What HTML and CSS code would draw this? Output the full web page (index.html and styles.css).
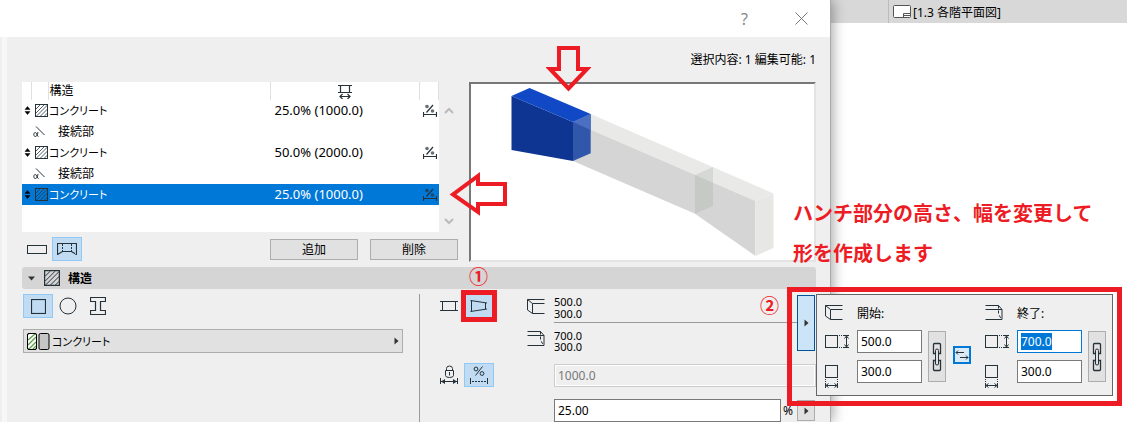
FILE: index.html
```html
<!DOCTYPE html>
<html lang="ja">
<head>
    <meta charset="UTF-8">
    <meta name="viewport" content="width=device-width, initial-scale=1.0">
    <title>構造</title>
    <link rel="stylesheet" href="styles.css">
</head>

<body>
    <svg class="sprite" aria-hidden="true">
        <symbol id="sort" viewBox="0 0 7 9">
            <path d="M1 3.5 3.5 0.5 6 3.5zM1 5.5 3.5 8.5 6 5.5z" fill="#000" stroke="#000" stroke-width="0.5"/>
        </symbol>
        <symbol id="hatch" viewBox="0 0 13 13">
            <path d="M1 5 5 1M1 9 9 1M1 12.5 12.5 1M5 12.5 12.5 5M9 12.5 12.5 9" stroke-width="0.8"/>
            <rect x="0.5" y="0.5" width="12" height="12"/>
        </symbol>
        <symbol id="angle" viewBox="0 0 13 12">
            <path d="M3 0.5 11.5 9"/>
            <path d="M5 6C4.5 8.5 4 10.5 2.3 10.5 0.3 10.5 0.3 6.5 2.3 6.5 4 6.5 3.8 10.5 5.5 10.5"/>
        </symbol>
        <symbol id="percent-width" viewBox="0 0 14 14">
            <path d="M3.5 8.5 10 1M0.5 8v5M13.5 8v5M1 10.5h12" stroke-width="1.2"/>
            <circle cx="4" cy="2.5" r="1.8" fill="#26323a" fill-opacity="0.7" stroke="none"/>
            <circle cx="9.5" cy="7" r="1.8" fill="#26323a" fill-opacity="0.7" stroke="none"/>
        </symbol>
        <symbol id="corner-start" viewBox="0 0 18 17">
            <path d="M17.5 1.5H0.5V12L5.5 15.5H17.5M0.5 1.5 5.5 5.5H17.5M5.5 5.5V15.5"/>
        </symbol>
        <symbol id="corner-end" viewBox="0 0 18 17">
            <path d="M0.5 1.5H13.5L17 5.5V15.5H0.5M0.5 5.5H17"/>
            <path d="M13.5 1.5V10L16 14.5" stroke-dasharray="3 2"/>
        </symbol>
        <symbol id="height" viewBox="0 0 25 14">
            <rect x="0.5" y="0.5" width="12" height="12"/>
            <path d="M14 0.5H20M14 12.5H20" stroke-dasharray="1 1"/>
            <path d="M21.5 1V12M19.5 3.5 21.5 1 23.5 3.5M19.5 9.5 21.5 12 23.5 9.5M19 0.5h5M19 12.5h5"/>
        </symbol>
        <symbol id="width" viewBox="0 0 14 24">
            <rect x="0.5" y="0.5" width="12" height="12"/>
            <path d="M0.5 14V18M12.5 14V18" stroke-dasharray="1 1"/>
            <path d="M1 20.5H12M3.5 18.5 1 20.5 3.5 22.5M9.5 18.5 12 20.5 9.5 22.5M0.5 18v5M12.5 18v5"/>
        </symbol>
        <symbol id="chain" viewBox="0 0 10 30">
            <path d="M3 11.5H1.5V2.5Q1.5 1.5 2.5 1.5H7.5Q8.5 1.5 8.5 2.5V11.5H7M3 18.5H1.5V27.5Q1.5 28.5 2.5 28.5H7.5Q8.5 28.5 8.5 27.5V18.5H7" stroke-width="1.3"/>
            <path d="M3.5 22V8.5Q3.5 7 5 7T6.5 8.5V22Q6.5 23 5 23T3.5 22z"/>
        </symbol>
        <symbol id="right" viewBox="0 0 5 8">
            <path d="M0.5 0.5 4.5 4 0.5 7.5z" fill="#333" stroke="none"/>
        </symbol>
    </svg>

    <div class="screen">
        <section class="dialog">
            <header class="titlebar">
                <button class="title-button" type="button">?</button>
                <button class="title-button" type="button" aria-label="閉じる">
                    <svg class="close" width="13" height="13" viewBox="0 0 13 13"><path d="M0.5 0.5 12.5 12.5M12.5 0.5 0.5 12.5"/></svg>
                </button>
            </header>

            <div class="dialog-body">
                <div class="status">選択内容: 1 編集可能: 1</div>

                <div class="overview">
                    <div class="segments">
                        <div class="list">
                            <table>
                                <colgroup>
                                    <col class="col-sort"><col class="col-icon"><col><col class="col-length"><col class="col-mode">
                                </colgroup>
                                <thead>
                                    <tr>
                                        <th></th>
                                        <th></th>
                                        <th>構造</th>
                                        <th class="center">
                                            <svg width="14" height="15" viewBox="0 0 14 15"><path d="M0 1.5h14M0 8.5h14M2.5 1.5v7M11.5 1.5v7M2 12.5h10M4.5 10 2 12.5 4.5 15M9.5 10 12 12.5 9.5 15" stroke-width="1.2"/></svg>
                                        </th>
                                        <th></th>
                                    </tr>
                                </thead>
                                <tbody>
                                    <tr>
                                        <td><svg width="7" height="9"><use href="#sort"/></svg></td>
                                        <td><svg width="13" height="13"><use href="#hatch"/></svg></td>
                                        <td class="kana">コンクリート</td>
                                        <td>25.0% (1000.0)</td>
                                        <td><svg width="14" height="14"><use href="#percent-width"/></svg></td>
                                    </tr>
                                    <tr class="joint">
                                        <td></td>
                                        <td><svg width="13" height="12"><use href="#angle"/></svg></td>
                                        <td>接続部</td>
                                        <td></td>
                                        <td></td>
                                    </tr>
                                    <tr>
                                        <td><svg width="7" height="9"><use href="#sort"/></svg></td>
                                        <td><svg width="13" height="13"><use href="#hatch"/></svg></td>
                                        <td class="kana">コンクリート</td>
                                        <td>50.0% (2000.0)</td>
                                        <td><svg width="14" height="14"><use href="#percent-width"/></svg></td>
                                    </tr>
                                    <tr class="joint">
                                        <td></td>
                                        <td><svg width="13" height="12"><use href="#angle"/></svg></td>
                                        <td>接続部</td>
                                        <td></td>
                                        <td></td>
                                    </tr>
                                    <tr class="selected">
                                        <td><svg width="7" height="9"><use href="#sort"/></svg></td>
                                        <td><svg width="13" height="13"><use href="#hatch"/></svg></td>
                                        <td class="kana">コンクリート</td>
                                        <td>25.0% (1000.0)</td>
                                        <td><svg width="14" height="14"><use href="#percent-width"/></svg></td>
                                    </tr>
                                </tbody>
                            </table>
                            <div class="scroller">
                                <svg width="10" height="7" viewBox="0 0 10 7"><path d="M1 6 5 2 9 6"/></svg>
                                <svg width="10" height="7" viewBox="0 0 10 7"><path d="M1 1 5 5 9 1"/></svg>
                            </div>
                        </div>

                        <div class="toolbar">
                            <button class="tool" type="button" aria-label="単一">
                                <svg width="20" height="9" viewBox="0 0 20 9"><rect x="0.5" y="0.5" width="19" height="8"/></svg>
                            </button>
                            <button class="tool active" type="button" aria-label="複数">
                                <svg width="20" height="12" viewBox="0 0 20 12"><path d="M0.5 11.5V0.5H19.5V11.5L14.5 8.5H5.5z" stroke-width="1.2"/><path d="M5.5 1v7M14.5 1v7" stroke-dasharray="2 1"/></svg>
                            </button>
                            <div class="actions">
                                <button class="push" type="button">追加</button>
                                <button class="push" type="button">削除</button>
                            </div>
                        </div>
                    </div>

                    <div class="preview">
                        <svg class="model" viewBox="471 84 343 176">
                            <g stroke="none">
                                <path d="M590.7 114 773.5 193.5 755.5 201 573 122z" fill="#e9eae8"/>
                                <path d="M573 122 755.5 201V256L695 213.7 573 161z" fill="#d5d5d5"/>
                                <path d="M755.5 201 773.5 193.5V248L755.5 256z" fill="#e7e8e6"/>
                                <path d="M695 175 713 167V206L695 213.7z" fill="#a8aea8" fill-opacity="0.3"/>
                                <path d="M511.5 96 573 122V161L511.5 150z" fill="#0f3592"/>
                                <path d="M511.5 96 529.5 88 590.7 114 573 122z" fill="#1148c6"/>
                                <path d="M573 122 590.7 114V153.3L573 161z" fill="#3157aa"/>
                                <path d="M573 122 590.7 114V130z" fill="#4b70c2"/>
                            </g>
                        </svg>
                        <svg class="arrow arrow-down" width="45" height="48" viewBox="0 0 45 48"><path d="M13 4H32V25H41L22.5 44.5 4 25H13z"/></svg>
                        <svg class="arrow arrow-left" width="60" height="48" viewBox="0 0 60 48"><path d="M56 14H29V6L4 24.5 29 42V34H56z"/></svg>
                    </div>
                </div>

                <h2 class="section-head">
                    <svg width="7" height="5" viewBox="0 0 7 5"><path d="M0 0.5H7L3.5 4.5z" fill="#333" stroke="none"/></svg>
                    <svg width="16" height="16"><use href="#hatch"/></svg>
                    構造
                    <span class="step step-one">①</span>
                </h2>

                <div class="details">
                    <div class="section-left">
                        <div class="shapes">
                            <button class="tool active" type="button" aria-label="四角形">
                                <svg width="15" height="15" viewBox="0 0 15 15"><rect x="0.5" y="0.5" width="14" height="14" stroke-width="1.2"/></svg>
                            </button>
                            <button class="tool" type="button" aria-label="円形">
                                <svg width="18" height="18" viewBox="0 0 18 18"><circle cx="9" cy="9" r="8"/></svg>
                            </button>
                            <button class="tool" type="button" aria-label="形鋼">
                                <svg width="16" height="18" viewBox="0 0 16 18"><path d="M0.5 0.5H15.5V4.5H10.5V13.5H15.5V17.5H0.5V13.5H5.5V4.5H0.5z" stroke-width="1.2"/></svg>
                            </button>
                        </div>
                        <button class="material" type="button">
                            <svg width="23" height="17" viewBox="0 0 23 17">
                                <rect x="0.5" y="0.5" width="9" height="16" rx="1.5" fill="#fff"/>
                                <path d="M1 7 8 1M1 12 9 4M2 16 9 9M6 16 9 13" stroke="#5aa04c" stroke-width="1.3"/>
                                <rect x="0.5" y="0.5" width="9" height="16" rx="1.5" stroke="#000"/>
                                <rect x="12" y="0.5" width="10" height="16" rx="1.5" fill="#c6c6c6" stroke="#000"/>
                            </svg>
                            <span class="kana">コンクリート</span>
                            <svg width="5" height="8"><use href="#right"/></svg>
                        </button>
                    </div>

                    <div class="section-right">
                        <div class="modes">
                            <button class="tool" type="button" aria-label="均一">
                                <svg width="18" height="10" viewBox="0 0 18 10"><path d="M0 0.5h18M0 9.5h18M2.5 0.5v9M15.5 0.5v9"/></svg>
                            </button>
                            <button class="tool active framed" type="button" aria-label="テーパー">
                                <svg width="18" height="12" viewBox="0 0 18 12"><path d="M0.5 0.5 17 3M0.5 11.5 17 9M1.5 0.5v11M15.5 3v6"/></svg>
                            </button>
                        </div>
                        <svg class="end-icon" width="18" height="17"><use href="#corner-start"/></svg>
                        <div class="pair first">500.0<br>300.0</div>
                        <svg class="end-icon end-two" width="18" height="17"><use href="#corner-end"/></svg>
                        <div class="pair">700.0<br>300.0</div>

                        <div class="flyout">
                            <span class="step step-two">②</span>
                            <button class="more open" type="button" aria-label="寸法">
                                <svg width="5" height="8"><use href="#right"/></svg>
                            </button>
                            <div class="popup">
                                <div class="end">
                                    <svg width="18" height="17"><use href="#corner-start"/></svg>
                                    <span class="end-name">開始:</span>
                                    <label for="startHeight"><svg width="25" height="14"><use href="#height"/></svg></label>
                                    <input id="startHeight" type="text" value="500.0">
                                    <label for="startWidth"><svg width="14" height="24"><use href="#width"/></svg></label>
                                    <input id="startWidth" type="text" value="300.0">
                                    <button class="link" type="button" aria-label="連動"><svg width="10" height="30"><use href="#chain"/></svg></button>
                                </div>
                                <button class="swap" type="button" aria-label="入れ替え">
                                    <svg width="14" height="10" viewBox="0 0 14 10"><path d="M1 2.5h8M3 0.5 1 2.5 3 4.5M5 7.5h8M11 5.5 13 7.5 11 9.5"/></svg>
                                </button>
                                <div class="end">
                                    <svg width="18" height="17"><use href="#corner-end"/></svg>
                                    <span class="end-name">終了:</span>
                                    <label for="endHeight"><svg width="25" height="14"><use href="#height"/></svg></label>
                                    <input id="endHeight" type="text" value="700.0" autofocus>
                                    <label for="endWidth"><svg width="14" height="24"><use href="#width"/></svg></label>
                                    <input id="endWidth" type="text" value="300.0">
                                    <button class="link" type="button" aria-label="連動"><svg width="10" height="30"><use href="#chain"/></svg></button>
                                </div>
                            </div>
                        </div>

                        <div class="modes length-modes">
                            <button class="tool" type="button" aria-label="固定長">
                                <svg width="18" height="20" viewBox="0 0 18 20"><path d="M6.5 5V3.5Q6.5 1 9.5 1T12.5 3.5V5M5.5 5.5H13.5V10.5Q13.5 12.5 9.5 12.5T5.5 10.5zM9.5 7V10.5M0.5 13v6M17.5 13v6M1 16.5h16"/><path d="M1 16.5 5 14V19zM17 16.5 13 14V19z" fill="#26323a" stroke="none"/></svg>
                            </button>
                            <button class="tool active" type="button" aria-label="比率">
                                <svg width="18" height="18" viewBox="0 0 18 18"><path d="M5.5 9.5 12.5 0.5M0.5 12v6M17.5 12v6"/><circle cx="6" cy="3" r="1.9"/><circle cx="12" cy="7.5" r="1.9"/><path d="M2 15.5h15" stroke-dasharray="2 1"/></svg>
                            </button>
                        </div>
                        <input class="total" type="text" value="1000.0" aria-label="長さ" disabled>
                        <input class="ratio" id="ratio" type="text" value="25.00">
                        <label class="unit" for="ratio">%</label>
                        <button class="more" type="button" aria-label="その他"><svg width="5" height="8"><use href="#right"/></svg></button>
                    </div>
                </div>
            </div>
        </section>

        <main class="workspace">
            <nav class="tabs">
                <a class="tab" href="#">
                    <svg width="18" height="13" viewBox="0 0 18 13"><rect x="0.5" y="0.5" width="17" height="12" rx="1" fill="#fff" stroke="#555"/><path d="M10.5 12.5V8.5H17.5M10.5 10.5H17.5" stroke="#555"/></svg>
                    [1.3 各階平面図]
                </a>
            </nav>
        </main>

        <p class="note">ハンチ部分の高さ、幅を変更して<br>形を作成します</p>
    </div>

    <script>
        const endHeight = document.getElementById('endHeight');
        endHeight.focus();
        endHeight.select();
    </script>
</body>
</html>
```

FILE: styles.css
```css
* {
    box-sizing: border-box;
}

body {
    margin: 0;
    background: #fff;
    color: #000;
    font-family: "Noto Sans", "Noto Sans CJK JP", sans-serif;
    font-size: 12px;
}

button,
input {
    font: inherit;
    color: inherit;
    margin: 0;
}

button {
    display: flex;
    align-items: center;
    justify-content: center;
    padding: 0;
    border: none;
    background: none;
}

svg {
    display: block;
    flex: none;
    fill: none;
    stroke: #26323a;
}

.sprite {
    position: absolute;
    width: 0;
    height: 0;
}

.screen {
    position: relative;
    display: flex;
    min-height: 100vh;
}

.dialog {
    position: relative;
    z-index: 1;
    flex: 1;
    display: flex;
    flex-direction: column;
    background: #efefef;
    border-right: 1px solid #aaa;
    box-shadow: 2px 0 12px rgba(0, 0, 0, 0.35);
}

.titlebar {
    display: flex;
    justify-content: flex-end;
    height: 37px;
    background: #fff;
}

.title-button {
    width: 57px;
    color: #888;
    font-size: 16px;
}

.close {
    stroke: #777;
}

.dialog-body {
    flex: 1;
    display: flex;
    flex-direction: column;
    padding: 0 14px 0 22px;
    background: linear-gradient(to right, #efefef 2px, #f7f7f7 2px, #f7f7f7 7px, #efefef 7px);
}

.status {
    height: 45px;
    line-height: 45px;
    text-align: right;
}

/* segment list and preview */

.overview {
    display: grid;
    grid-template-columns: 1fr 347px;
    gap: 11px;
}

.list {
    display: flex;
    height: 150px;
}

table {
    flex: 1;
    align-self: flex-start;
    table-layout: fixed;
    border-collapse: collapse;
    background: #fff;
    font-size: 13px;
}

.list table {
    box-shadow: 0 27px #fff;
}

.col-sort {
    width: 9px;
}

.col-icon {
    width: 17px;
}

.col-length {
    width: 149px;
}

.col-mode {
    width: 19px;
}

th,
td {
    height: 21px;
    padding: 0;
    line-height: 20px;
    text-align: left;
    font-weight: normal;
    white-space: nowrap;
}

th {
    height: 18px;
    line-height: 18px;
    font-size: 12px;
    border-right: 1px solid #e0e0e0;
}

th:nth-child(3),
td:nth-child(3) {
    padding-left: 1px;
}

td:nth-child(1) svg {
    margin-left: 2px;
}

td:nth-child(2) svg {
    margin-left: 4px;
}

td:nth-child(4) {
    padding: 0 0 1px 4px;
}

td:nth-child(5) svg {
    margin-left: 3px;
}

th.center svg {
    margin: 0 auto;
}

.kana {
    font-size: 11px;
    font-feature-settings: "palt";
}

.joint td {
    font-size: 12px;
}

.joint td:nth-child(2) svg {
    margin-left: 2px;
}

.joint td:nth-child(3) {
    padding-left: 10px;
}

.selected {
    background: #0078d7;
    color: #fff;
}

.scroller {
    width: 19px;
    display: flex;
    flex-direction: column;
    justify-content: space-between;
    align-items: center;
    padding: 25px 0 7px;
}

.scroller svg {
    stroke: #bbb;
    stroke-width: 2;
}

.toolbar {
    display: flex;
    align-items: center;
    margin-top: 5px;
}

.tool {
    width: 30px;
    height: 24px;
    border: 1px solid transparent;
}

.tool.active {
    background: #c1dcf2;
    border-color: #90c8f6;
}

.actions {
    display: flex;
    gap: 12px;
    margin-left: auto;
}

.push {
    width: 88px;
    height: 21px;
    background: #e1e1e1;
    border: 1px solid #adadad;
}

.preview {
    position: relative;
    height: 180px;
    background: #fff;
    border: 2px solid;
    border-color: #777 #e3e3e3 #e3e3e3 #777;
}

.model {
    width: 100%;
    height: 100%;
}

.arrow {
    position: absolute;
    stroke: #ed1c24;
    stroke-width: 4;
}

.arrow-down {
    left: 75px;
    top: -40px;
}

.arrow-left {
    left: -22px;
    top: 86px;
}

/* structure section */

.section-head {
    position: relative;
    display: flex;
    align-items: center;
    height: 22px;
    margin: 5px 0;
    padding-left: 6px;
    border-radius: 3px;
    background: #d5d5d5;
    font-size: 12px;
}

.section-head svg + svg {
    margin: 0 8px 0 9px;
}

.details {
    flex: 1;
    display: flex;
    gap: 16px;
    padding-left: 1px;
}

.section-left {
    flex: 1;
}

.shapes,
.modes {
    display: flex;
}

.material {
    width: 100%;
    height: 24px;
    gap: 2px;
    margin-top: 11px;
    padding: 0 3px;
    justify-content: flex-start;
    background: #e1e1e1;
    border: 1px solid #adadad;
}

.material svg:last-child {
    margin-left: auto;
}

.section-right {
    width: 397px;
    display: grid;
    grid-template-columns: 87px 27px 1fr 16px 19px;
    grid-template-rows: 29px 28px 36px 35px;
    align-items: end;
    padding-left: 20px;
    border-left: 1px solid #999;
}

.section-right > .modes {
    grid-column: 1;
    margin-left: -6px;
}

.section-right > .modes:first-child {
    align-self: start;
}

.length-modes {
    grid-row: 3;
}

.end-icon {
    grid-column: 2;
    align-self: center;
    margin-bottom: 4px;
}

.end-two {
    align-self: end;
}

.pair {
    grid-column: 3 / 5;
    align-self: start;
    height: 28px;
    padding-top: 7px;
    font-size: 11px;
    line-height: 11px;
}

.pair.first {
    height: 29px;
    padding-top: 2px;
    line-height: 12px;
    border-bottom: 1px solid #999;
}

.section-right input {
    width: 100%;
    min-width: 0;
    height: 23px;
    padding: 0 3px;
    border: 1px solid #7a7a7a;
    background: #fff;
    outline: none;
}

.section-right .total {
    grid-column: 3 / 6;
    grid-row: 3;
    border-color: #ccc;
    box-shadow: inset 0 0 0 1px #fff;
    background: #efefef;
    color: #777;
}

.section-right .ratio {
    grid-column: 3;
    grid-row: 4;
}

.unit {
    grid-column: 4;
    grid-row: 4;
    line-height: 23px;
    padding-left: 2px;
}

.more {
    grid-column: 5;
    width: 18px;
    height: 21px;
    margin-bottom: 1px;
    background: #e1e1e1;
    border: 1px solid #adadad;
}

.flyout {
    position: relative;
    grid-column: 5;
    grid-row: 1 / 3;
}

.more.open {
    height: 56px;
    margin-bottom: 0;
    background: #cce4f7;
    border-color: #005499;
}

.popup {
    position: absolute;
    z-index: 2;
    left: 100%;
    top: -1px;
    display: flex;
    align-items: flex-start;
    width: 297px;
    padding: 0 6px 12px 8px;
    background: #efefef;
    border: 1px solid #666;
}

.end {
    display: grid;
    grid-template-columns: 32px 65px 24px;
    grid-template-rows: 35px 30px 23px;
    align-items: center;
}

.end-name {
    grid-column: 2 / 4;
}

.end label {
    grid-column: 1;
    align-self: start;
    height: 18px;
    padding-top: 5px;
}

.end input {
    grid-column: 2;
    align-self: start;
}

.link {
    grid-column: 3;
    grid-row: 2 / 4;
    justify-self: end;
    align-self: center;
    width: 18px;
    height: 51px;
    background: #e1e1e1;
    border: 1px solid #adadad;
}

.swap {
    width: 18px;
    height: 18px;
    margin: 51px 14px 0 7px;
    background: #dceaf6;
    border: 2px solid #0078d7;
}

.popup input:focus {
    border-color: #0078d7;
}

.popup input::selection {
    background: #0078d7;
    color: #fff;
}

/* red marks */

.framed {
    position: relative;
}

.framed::after,
.popup::after {
    content: "";
    position: absolute;
    border: 5px solid #ed1c24;
    pointer-events: none;
}

.framed::after {
    inset: -5px -4px;
}

.popup::after {
    inset: -8px -10px -11px -30px;
}

.step {
    position: absolute;
    color: #ed1c24;
    font-size: 19px;
    font-weight: bold;
    line-height: 20px;
}

.step-one {
    right: 328px;
    top: 0;
}

.step-two {
    right: 37px;
    top: 1px;
}

.note {
    position: absolute;
    z-index: 3;
    right: 34px;
    top: 193px;
    width: 300px;
    margin: 0;
    color: #ed1c24;
    font-family: "Noto Sans CJK JP", sans-serif;
    font-size: 20px;
    font-weight: bold;
    line-height: 40px;
    white-space: nowrap;
}

/* drawing area behind the dialog */

.workspace {
    width: 296px;
}

.tabs {
    display: flex;
    height: 23px;
    padding-left: 57px;
    background: #d8d8d8;
}

.tab {
    flex: 1;
    display: flex;
    align-items: center;
    gap: 2px;
    padding-left: 4px;
    border-left: 1px solid #bbb;
    color: #000;
    font-size: 12px;
    text-decoration: none;
}
```
